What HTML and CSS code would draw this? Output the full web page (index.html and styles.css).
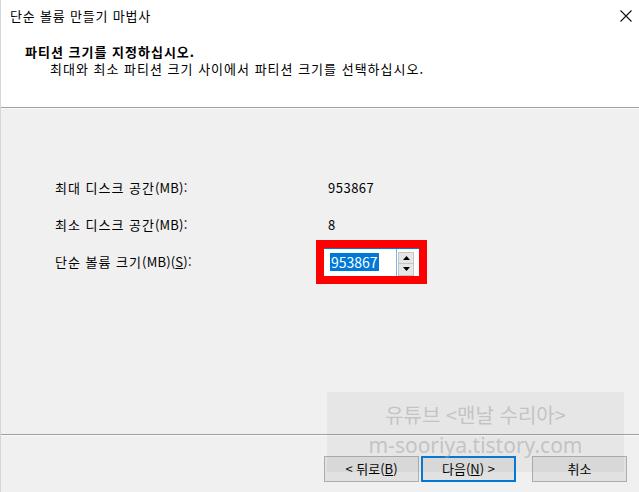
FILE: index.html
```html
<!DOCTYPE html>
<html lang="ko">
<head>
<meta charset="utf-8">
<link rel="stylesheet" href="styles.css">
</head>
<body>
<div class="window">
  <div class="header">
    <div class="titlebar">
      <span class="title">단순 볼륨 만들기 마법사</span>
      <svg class="close" width="12" height="12" viewBox="0 0 12 12"><path d="M0.5 0.5L11.5 11.5M11.5 0.5L0.5 11.5" stroke="#111" stroke-width="1.1" fill="none"/></svg>
    </div>
    <div class="heading">파티션 크기를 지정하십시오.</div>
    <div class="subheading">최대와 최소 파티션 크기 사이에서 파티션 크기를 선택하십시오.</div>
  </div>
  <div class="sep"></div>
  <div class="content">
    <div class="grid">
      <div class="label">최대 디스크 공간<span class="lat">(MB):</span></div>
      <div class="value">953867</div>
      <div class="label">최소 디스크 공간<span class="lat">(MB):</span></div>
      <div class="value">8</div>
      <div class="label">단순 볼륨 크기<span class="lat">(MB)(<u>S</u>):</span></div>
      <div class="redbox">
        <div class="spin">
          <div class="field"><span class="sel">953867</span></div>
          <div class="spinbtns">
            <div class="sbtn"><svg width="7" height="4" viewBox="0 0 7 4"><path d="M0 4L3.5 0L7 4Z" fill="#000"/></svg></div>
            <div class="sbtn"><svg width="7" height="4" viewBox="0 0 7 4"><path d="M0 0L3.5 4L7 0Z" fill="#000"/></svg></div>
          </div>
        </div>
      </div>
    </div>
  </div>
  <div class="sep"></div>
  <div class="footer">
    <button class="btn">&lt; 뒤로(<u>B</u>)</button>
    <button class="btn primary">다음(<u>N</u>) &gt;</button>
    <button class="btn cancel">취소</button>
  </div>
  <div class="watermark">
    <div class="wm1">유튜브 &lt;맨날 수리아&gt;</div>
    <div class="wm2">m-sooriya.tistory.com</div>
  </div>
</div>
</body>
</html>
```

FILE: styles.css
```css
* { box-sizing: border-box; }
html, body { margin: 0; padding: 0; }
body {
  width: 639px;
  height: 492px;
  overflow: hidden;
  font-family: "Noto Sans CJK KR", "Noto Sans", sans-serif;
  font-size: 13px;
  color: #000;
  background: #f0f0f0;
}
.window {
  position: relative;
  width: 639px;
  height: 492px;
  display: flex;
  flex-direction: column;
  border-left: 1px solid #d6d6d6;
}
.header {
  height: 107px;
  background: #fff;
  display: flex;
  flex-direction: column;
}
.titlebar {
  height: 31px;
  display: flex;
  align-items: center;
  justify-content: space-between;
  padding: 1px 7px 1px 9px;
}
.title { line-height: 16px; letter-spacing: 0.8px; }
.close { display: block; }
.heading {
  font-weight: bold;
  padding-left: 24px;
  margin-top: 12px;
  line-height: 17px;
  letter-spacing: 1px;
}
.subheading {
  padding-left: 49px;
  margin-top: 0;
  line-height: 17px;
  letter-spacing: 1px;
}
.sep {
  height: 2px;
  border-top: 1px solid #a0a0a0;
  border-bottom: 1px solid #fbfbfb;
}
.content {
  flex: 1;
  padding-top: 60px;
  padding-left: 54px;
}
.grid {
  display: grid;
  grid-template-columns: 270px 120px;
  grid-template-rows: 37px 37px 37px;
  align-items: center;
}
.label { line-height: 16px; letter-spacing: 1px; }
.lat { letter-spacing: 0.2px; }
.value { padding-left: 3px; line-height: 16px; letter-spacing: 0.5px; }
.redbox {
  width: 111px;
  height: 44px;
  margin-left: -9px;
  border: 8px solid #ff0000;
  background: #fff;
  overflow: hidden;
}
.spin {
  display: flex;
  height: 28px;
  border-top: 1px solid #0078d7;
}
.field {
  width: 73px;
  padding-left: 6px;
  padding-top: 4px;
  border-right: 1px solid #7eb4ea;
}
.sel {
  display: inline-block;
  background: #0078d7;
  color: #fff;
  font-size: 14px;
  line-height: 18px;
  padding: 0 1px;
}
.spinbtns {
  display: flex;
  flex-direction: column;
  padding: 3px 0 0 1px;
}
.sbtn {
  width: 16px;
  height: 12px;
  background: #e6e6e6;
  border: 1px solid #c4c4c4;
  display: flex;
  align-items: center;
  justify-content: center;
}
.sbtn + .sbtn { border-top: none; }
.footer {
  height: 56px;
  display: flex;
  align-items: flex-start;
  padding-top: 20px;
  padding-left: 323px;
}
.btn {
  font-family: inherit;
  font-size: 13px;
  width: 95px;
  height: 26px;
  background: #e1e1e1;
  border: 1px solid #adadad;
  color: #000;
  padding: 0;
  margin: 0;
  line-height: 16px;
}
.btn.primary {
  margin-left: 2px;
  border: 2px solid #0078d7;
}
.btn.cancel { margin-left: 16px; }
.watermark {
  position: absolute;
  left: 326px;
  top: 392px;
  width: 297px;
  height: 80px;
  background: rgba(120, 120, 120, 0.08);
  color: rgba(160, 160, 160, 0.5);
  text-align: center;
  pointer-events: none;
}
.wm1 {
  font-size: 20px;
  line-height: 26px;
  margin-top: 10px;
}
.wm2 {
  font-family: "Noto Sans", sans-serif;
  font-size: 21px;
  line-height: 28px;
  margin-top: 3px;
}
```
